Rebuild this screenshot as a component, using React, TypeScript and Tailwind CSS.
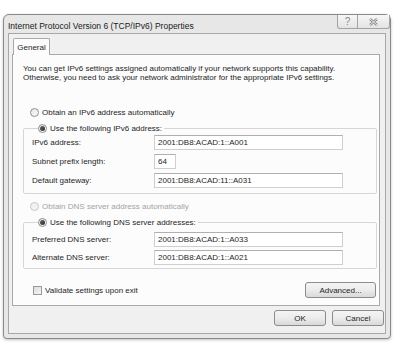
import React from 'react';

const Radio = ({ checked = false, disabled = false }: { checked?: boolean; disabled?: boolean }) => (
  <span
    className={`flex items-center justify-center w-[9px] h-[9px] rounded-full border ${
      disabled ? 'border-[#c8c8c8] bg-[#f2f2f2]' : 'border-[#8f8f8f] bg-gradient-to-br from-[#e6e6e6] to-[#fafafa]'
    }`}
  >
    {checked && <span className="block w-[5px] h-[5px] rounded-full bg-gradient-to-br from-[#6a6a6a] to-[#2a2a2a]" />}
  </span>
);

const Field = ({ label, value, width = 'w-[189px]' }: { label: string; value: string; width?: string }) => (
  <div className="flex items-center h-[15px]">
    <span className="w-[122px] shrink-0">{label}</span>
    <div className={`${width} h-[15px] flex items-center pl-[3px] bg-white border border-[#cfcfcf] border-t-[#b0b0b0]`}>
      {value}
    </div>
  </div>
);

const Button = ({ children, className = '' }: { children: React.ReactNode; className?: string }) => (
  <button
    className={`h-[16px] flex items-center justify-center rounded-[3px] border border-[#8c8c8c] bg-gradient-to-b from-[#f4f4f4] via-[#ececec] to-[#d9d9d9] text-[#1e1e1e] ${className}`}
  >
    {children}
  </button>
);

export default function App() {
  return (
    <div
      className="w-[400px] h-[348px] bg-white pt-[14px] pl-[3px] text-[8px] leading-[9px] text-[#1e1e1e]"
      style={{ fontFamily: '"Liberation Sans", Arial, sans-serif' }}
    >
      <div className="w-[388px] h-[325px] flex flex-col rounded-t-[6px] rounded-b-[4px] border border-[#8a8a8a] bg-[#e7e7e7] shadow-[0_1px_3px_rgba(0,0,0,0.25)]">
        {/* Title bar */}
        <div className="h-[18px] flex items-start justify-between pl-[4px]">
          <span className="mt-[6px] text-[8.5px] leading-[10px] text-[#1a1a1a]">
            Internet Protocol Version 6 (TCP/IPv6) Properties
          </span>
          <div className="flex">
            <div className="w-[21px] h-[14px] flex items-center justify-center border border-t-0 border-[#a3a3a3] rounded-bl-[3px] bg-gradient-to-b from-[#f7f7f7] to-[#e3e3e3] text-[10px] text-[#8a8a8a]">
              ?
            </div>
            <div className="w-[32px] h-[14px] flex items-center justify-center border border-t-0 border-l-0 border-[#a3a3a3] rounded-br-[3px] bg-gradient-to-b from-[#f7f7f7] to-[#e3e3e3]">
              <svg width="9" height="8" viewBox="0 0 9 8">
                <path d="M1 1 L8 7 M8 1 L1 7" stroke="#8a8a8a" strokeWidth="2.4" />
                <path d="M1 1 L8 7 M8 1 L1 7" stroke="#f2f2f2" strokeWidth="0.9" />
              </svg>
            </div>
          </div>
        </div>

        {/* Client area */}
        <div className="flex-1 flex flex-col mx-[4px] mb-[4px] border border-[#a8a8a8] bg-[#f0f0f0] pt-[4px] pl-[3px] pr-[1px]">
          {/* Tabs */}
          <div className="flex pl-[1px] mr-[4px]">
            <div className="w-[37px] h-[17px] flex items-center justify-center border border-b-0 border-[#a9a9a9] rounded-t-[2px] bg-[#fcfcfc] -mb-px relative">
              General
            </div>
          </div>
          <div className="h-[252px] mr-[4px] border border-[#a9a9a9] bg-[#fcfcfc] flex flex-col pl-[10px] pr-[2px]">
            <p className="mt-[9px]">
              You can get IPv6 settings assigned automatically if your network supports this capability.
              <br />
              Otherwise, you need to ask your network administrator for the appropriate IPv6 settings.
            </p>

            <label className="mt-[24px] h-[12px] flex items-center gap-[3px] pl-[7px]">
              <Radio />
              <span>Obtain an IPv6 address automatically</span>
            </label>

            <fieldset className="mt-[4px] border border-[#d6d6d6] rounded-[2px] pl-[8px] pt-[1px] pb-[5px] flex flex-col gap-[4px]">
              <legend className="ml-[6px] h-[12px] flex items-center gap-[3px] pr-[2px]">
                <Radio checked />
                <span>Use the following IPv6 address:</span>
              </legend>
              <Field label="IPv6 address:" value="2001:DB8:ACAD:1::A001" />
              <Field label="Subnet prefix length:" value="64" width="w-[22px]" />
              <Field label="Default gateway:" value="2001:DB8:ACAD:11::A031" />
            </fieldset>

            <label className="mt-[6px] h-[12px] flex items-center gap-[3px] pl-[7px] text-[#a3a3a3]">
              <Radio disabled />
              <span>Obtain DNS server address automatically</span>
            </label>

            <fieldset className="mt-[4px] border border-[#d6d6d6] rounded-[2px] pl-[8px] pt-[4px] pb-[3px] flex flex-col gap-[3px]">
              <legend className="ml-[6px] h-[12px] flex items-center gap-[3px] pr-[2px]">
                <Radio checked />
                <span>Use the following DNS server addresses:</span>
              </legend>
              <Field label="Preferred DNS server:" value="2001:DB8:ACAD:1::A033" />
              <Field label="Alternate DNS server:" value="2001:DB8:ACAD:1::A021" />
            </fieldset>

            <div className="mt-[13px] flex items-center justify-between pl-[10px] pr-[1px]">
              <label className="flex items-center gap-[3px]">
                <span className="w-[9px] h-[9px] border border-[#9a9a9a] bg-gradient-to-br from-[#dcdcdc] to-[#f6f6f6]" />
                <span>Validate settings upon exit</span>
              </label>
              <Button className="w-[71px]">Advanced...</Button>
            </div>
          </div>

          {/* Bottom buttons */}
          <div className="mt-[4px] flex justify-end gap-[6px]">
            <Button className="w-[52px]">OK</Button>
            <Button className="w-[52px]">Cancel</Button>
          </div>
        </div>
      </div>
    </div>
  );
}
